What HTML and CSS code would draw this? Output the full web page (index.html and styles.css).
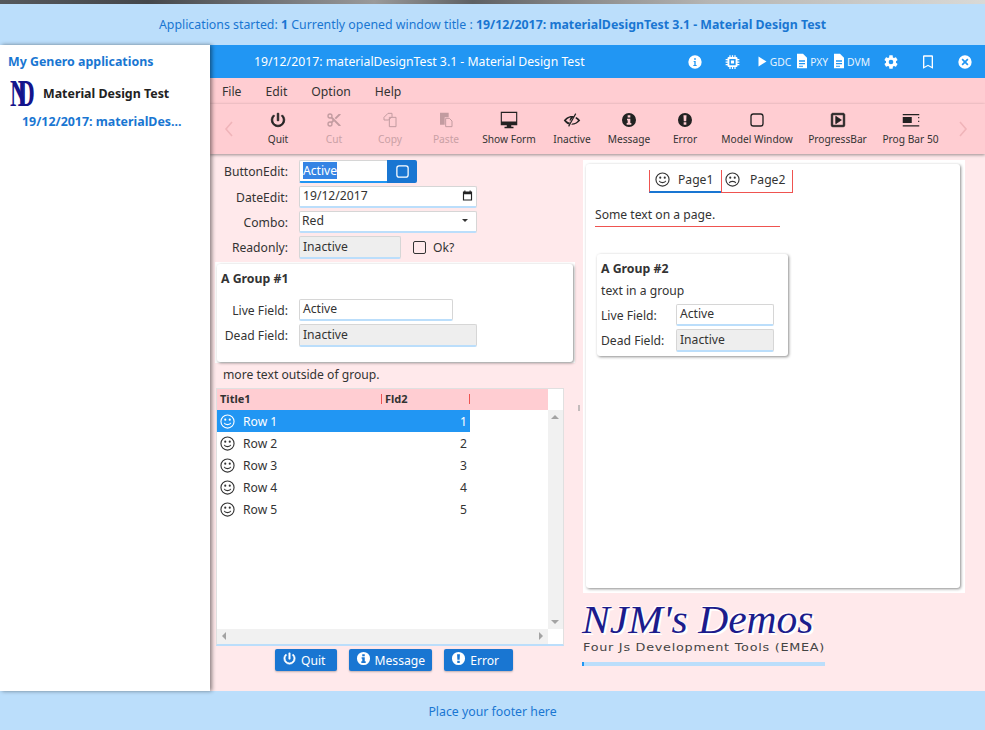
FILE: index.html
```html
<!DOCTYPE html>
<html lang="en">
<head>
  <meta charset="UTF-8">
  <meta name="viewport" content="width=device-width, initial-scale=1.0">
  <title>Material Design Test</title>
  <link rel="stylesheet" href="styles.css">
</head>
<body>
  <svg class="defs" width="0" height="0">
    <symbol id="i-power" viewBox="0 0 24 24"><path stroke="currentColor" stroke-width="1.1" d="M13,3H11V13H13V3M17.83,5.17L16.41,6.59C18.05,7.91 19,9.9 19,12A7,7 0 0,1 12,19C8.12,19 5,15.88 5,12C5,9.91 5.94,7.91 7.58,6.58L6.17,5.17C4.23,6.82 3,9.26 3,12A9,9 0 0,0 12,21A9,9 0 0,0 21,12C21,9.26 19.77,6.82 17.83,5.17Z"/></symbol>
    <symbol id="i-info" viewBox="0 0 24 24"><path fill-rule="evenodd" d="M12,1.5A10.5,10.5 0 1,0 12,22.5A10.5,10.5 0 1,0 12,1.5ZM10,5H14V8.2H10ZM9,10H14V16.5H15.5V19H8.5V16.5H10V12.5H9Z"/></symbol>
    <symbol id="i-alert" viewBox="0 0 24 24"><path fill-rule="evenodd" d="M12,1.5A10.5,10.5 0 1,0 12,22.5A10.5,10.5 0 1,0 12,1.5ZM9.7,5H14.3L13.8,14H10.2ZM10,15.5H14V19H10Z"/></symbol>
    <symbol id="i-smile" viewBox="0 0 24 24"><g fill="none" stroke="currentColor" stroke-width="1.8"><circle cx="12" cy="12" r="10.5"/><path d="M6.8,14.2C8,17.9 16,17.9 17.2,14.2"/></g><circle cx="8.4" cy="9" r="1.7"/><circle cx="15.6" cy="9" r="1.7"/></symbol>
    <symbol id="i-frown" viewBox="0 0 24 24"><g fill="none" stroke="currentColor" stroke-width="1.8"><circle cx="12" cy="12" r="10.5"/><path d="M6.8,17.6C8,14 16,14 17.2,17.6"/></g><circle cx="8.4" cy="9" r="1.7"/><circle cx="15.6" cy="9" r="1.7"/></symbol>
    <symbol id="i-square" viewBox="0 0 24 24"><rect x="3" y="3" width="18" height="18" rx="3.5" fill="none" stroke="currentColor" stroke-width="2"/></symbol>
    <symbol id="i-doc" viewBox="4 0 17 24"><path fill-rule="evenodd" d="M5,1H14L20,7V23H5ZM8,11V13H17V11ZM8,15V17H17V15ZM8,19V20.5H14V19Z"/></symbol>
  </svg>

  <div class="top-strip"></div>
  <header class="banner">Applications started: <b>1</b> Currently opened window title : <b>19/12/2017: materialDesignTest 3.1 - Material Design Test</b></header>

  <div class="middle">
    <aside class="sidebar">
      <div class="side-title">My Genero applications</div>
      <div class="side-app">
        <span class="nd-logo">ND</span>
        <span>Material Design Test</span>
      </div>
      <div class="side-window">19/12/2017: materialDes...</div>
    </aside>

    <main class="main">
      <div class="titlebar">
        <div class="win-title">19/12/2017: materialDesignTest 3.1 - Material Design Test</div>
        <div class="title-tools">
          <svg class="ti t-info" viewBox="0 0 24 24"><path fill-rule="evenodd" d="M12,2A10,10 0 1,0 12,22A10,10 0 1,0 12,2ZM11,6H13V9H11ZM10,10.5H13V16.5H14.5V18H9.5V16.5H11V12H10Z"/></svg>
          <svg class="ti t-chip" viewBox="0 0 24 24"><path fill-rule="evenodd" d="M6,4H18A2,2 0 0,1 20,6V18A2,2 0 0,1 18,20H6A2,2 0 0,1 4,18V6A2,2 0 0,1 6,4ZM7,7V17H17V7ZM9.5,9.5H14.5V14.5H9.5ZM7,1H9V4H7ZM11,1H13V4H11ZM15,1H17V4H15ZM7,20H9V23H7ZM11,20H13V23H11ZM15,20H17V23H15ZM1,7H4V9H1ZM1,11H4V13H1ZM1,15H4V17H1ZM20,7H23V9H20ZM20,11H23V13H20ZM20,15H23V17H20Z"/></svg>
          <span class="t-link t-gdc"><svg class="ts ts-play" viewBox="0 0 24 24"><path d="M5,2L21,12L5,22Z"/></svg>GDC</span>
          <span class="t-link"><svg class="ts"><use href="#i-doc"/></svg>PXY</span>
          <span class="t-link"><svg class="ts"><use href="#i-doc"/></svg>DVM</span>
          <svg class="ti t-cog" viewBox="0 0 24 24"><path d="M12,15.5A3.5,3.5 0 0,1 8.5,12A3.5,3.5 0 0,1 12,8.5A3.5,3.5 0 0,1 15.5,12A3.5,3.5 0 0,1 12,15.5M19.43,12.97C19.47,12.65 19.5,12.33 19.5,12C19.5,11.67 19.47,11.34 19.43,11L21.54,9.37C21.73,9.22 21.78,8.95 21.66,8.73L19.66,5.27C19.54,5.05 19.27,4.96 19.05,5.05L16.56,6.05C16.04,5.66 15.5,5.32 14.87,5.07L14.5,2.42C14.46,2.18 14.25,2 14,2H10C9.75,2 9.54,2.18 9.5,2.42L9.13,5.07C8.5,5.32 7.96,5.66 7.44,6.05L4.95,5.05C4.73,4.96 4.46,5.05 4.34,5.27L2.34,8.73C2.21,8.95 2.27,9.22 2.46,9.37L4.57,11C4.53,11.34 4.5,11.67 4.5,12C4.5,12.33 4.53,12.65 4.57,12.97L2.46,14.63C2.27,14.78 2.21,15.05 2.34,15.27L4.34,18.73C4.46,18.95 4.73,19.03 4.95,18.95L7.44,17.94C7.96,18.34 8.5,18.68 9.13,18.93L9.5,21.58C9.54,21.82 9.75,22 10,22H14C14.25,22 14.46,21.82 14.5,21.58L14.87,18.93C15.5,18.67 16.04,18.34 16.56,17.94L19.05,18.95C19.27,19.03 19.54,18.95 19.66,18.73L21.66,15.27C21.78,15.05 21.73,14.78 21.54,14.63L19.43,12.97Z"/></svg>
          <svg class="ti t-mark" viewBox="0 0 24 24"><path fill-rule="evenodd" d="M6,2H18A1.5,1.5 0 0,1 19.5,3.5V22L12,18L4.5,22V3.5A1.5,1.5 0 0,1 6,2ZM6.5,4V19L12,16L17.5,19V4Z"/></svg>
          <svg class="ti t-close" viewBox="0 0 24 24"><path fill-rule="evenodd" d="M12,2A10,10 0 1,0 12,22A10,10 0 1,0 12,2ZM8.6,6.8L12,10.2L15.4,6.8L17.2,8.6L13.8,12L17.2,15.4L15.4,17.2L12,13.8L8.6,17.2L6.8,15.4L10.2,12L6.8,8.6Z"/></svg>
        </div>
      </div>

      <nav class="menubar">
        <span>File</span><span>Edit</span><span>Option</span><span>Help</span>
      </nav>

      <div class="toolbar">
        <svg class="chev chev-left" viewBox="0 0 10 20"><path d="M8,3L2,10L8,17" fill="none" stroke="currentColor" stroke-width="1.6"/></svg>
        <div class="tool w-quit"><svg viewBox="0 0 24 24"><use href="#i-power"/></svg>Quit</div>
        <div class="tool w-cut off"><svg viewBox="0 0 24 24"><path d="M19,3L13,9L15,11L22,4V3M12,12.5A0.5,0.5 0 0,1 11.5,12A0.5,0.5 0 0,1 12,11.5A0.5,0.5 0 0,1 12.5,12A0.5,0.5 0 0,1 12,12.5M6,20A2,2 0 0,1 4,18C4,16.89 4.9,16 6,16A2,2 0 0,1 8,18C8,19.11 7.1,20 6,20M6,8A2,2 0 0,1 4,6C4,4.89 4.9,4 6,4A2,2 0 0,1 8,6C8,7.11 7.1,8 6,8M9.64,7.64C9.87,7.14 10,6.59 10,6A4,4 0 0,0 6,2A4,4 0 0,0 2,6A4,4 0 0,0 6,10C6.59,10 7.14,9.87 7.64,9.64L10,12L7.64,14.36C7.14,14.13 6.59,14 6,14A4,4 0 0,0 2,18A4,4 0 0,0 6,22A4,4 0 0,0 10,18C10,17.41 9.87,16.86 9.64,16.36L12,14L19,21H22V20L9.64,7.64Z"/></svg>Cut</div>
        <div class="tool w-copy off"><svg viewBox="0 0 24 24"><g fill="none" stroke="currentColor" stroke-width="1.5"><path d="M9,2H15V7L10,12H3V8Z"/><path d="M11,8H21V22H11Z"/></g></svg>Copy</div>
        <div class="tool w-paste off"><svg viewBox="0 0 24 24"><path d="M3,1H16V8H10V19H3Z"/><path d="M11.5,9.5H17L21,13.5V22H11.5Z" fill="none" stroke="currentColor" stroke-width="1.5"/></svg>Paste</div>
        <div class="tool w-show"><svg viewBox="0 0 24 24"><path fill-rule="evenodd" d="M1,1H23V19H15V21H18V23H6V21H9V19H1ZM2.5,2.5V14H21.5V2.5Z"/></svg>Show Form</div>
        <div class="tool w-inact"><svg viewBox="0 0 24 24"><path d="M12,6.5C6.5,6.5 3,10 1,12.5C3,15 5,17 8,18L9.5,15.5C7.5,15 5.8,14 4,12.5C6,10.5 8,9 10.5,8.8L9,10.5V14L15,6.8C14,6.6 13,6.5 12,6.5Z"/><path d="M17,3.5L7.5,20.5" fill="none" stroke="currentColor" stroke-width="1.5"/><path d="M17.5,8C20,9 21.5,11 23,12.5C20.5,15.5 16,18.5 11,18.3L12.3,16.5C15.5,16.5 18,15 20,12.5C18.8,11.2 17.8,10.3 16.5,9.6Z"/></svg>Inactive</div>
        <div class="tool w-msg small"><svg viewBox="0 0 24 24"><use href="#i-info"/></svg>Message</div>
        <div class="tool w-err small"><svg viewBox="0 0 24 24"><use href="#i-alert"/></svg>Error</div>
        <div class="tool w-model small"><svg viewBox="0 0 24 24"><use href="#i-square"/></svg>Model Window</div>
        <div class="tool w-prog"><svg viewBox="0 0 24 24"><path stroke="currentColor" stroke-width="1" d="M19,3H5C3.89,3 3,3.89 3,5V19A2,2 0 0,0 5,21H19A2,2 0 0,0 21,19V5C21,3.89 20.1,3 19,3M19,19H5V5H19V19M9,7V17L16.5,12L9,7Z"/></svg>ProgressBar</div>
        <div class="tool w-bar"><svg viewBox="0 0 24 24"><path d="M1,4H23V5.5H1ZM1,8H13V16H1ZM1,19H23V20.5H1ZM21.5,8H23V9.5H21.5ZM21.5,13H23V14.5H21.5Z"/></svg>Prog Bar 50</div>
        <svg class="chev chev-right" viewBox="0 0 10 20"><path d="M2,3L8,10L2,17" fill="none" stroke="currentColor" stroke-width="1.6"/></svg>
      </div>

      <div class="content">
        <section class="col-left">
          <div class="row">
            <label>ButtonEdit:</label>
            <span class="field f-btnedit"><span class="selected">Active</span></span>
            <span class="edit-btn"><svg viewBox="0 0 24 24"><use href="#i-square"/></svg></span>
          </div>
          <div class="row">
            <label>DateEdit:</label>
            <span class="field f-wide">19/12/2017
              <svg class="cal" viewBox="0 0 24 24"><path fill-rule="evenodd" d="M5,1H7.5V3H16.5V1H19V3H22V23H2V3H5ZM4.5,9V20.5H19.5V9Z"/></svg>
            </span>
          </div>
          <div class="row">
            <label>Combo:</label>
            <span class="field f-wide f-combo">Red<i class="caret"></i></span>
          </div>
          <div class="row">
            <label>Readonly:</label>
            <span class="field f-ro f-mid">Inactive</span>
            <span class="check"></span><span class="check-label">Ok?</span>
          </div>

          <div class="group-wrap">
            <div class="card group1">
              <h4>A Group #1</h4>
              <div class="row g1-row">
                <label>Live Field:</label>
                <span class="field f-live">Active</span>
              </div>
              <div class="row">
                <label>Dead Field:</label>
                <span class="field f-ro f-wide">Inactive</span>
              </div>
            </div>
          </div>

          <div class="more-text">more text outside of group.</div>

          <div class="table">
            <div class="thead">
              <div class="th th-1">Title1</div>
              <div class="th th-2">Fld2</div>
            </div>
            <div class="tbody">
              <div class="rows">
                <div class="tr on"><svg viewBox="0 0 24 24"><use href="#i-smile"/></svg><span>Row 1</span><b>1</b></div>
                <div class="tr"><svg viewBox="0 0 24 24"><use href="#i-smile"/></svg><span>Row 2</span><b>2</b></div>
                <div class="tr"><svg viewBox="0 0 24 24"><use href="#i-smile"/></svg><span>Row 3</span><b>3</b></div>
                <div class="tr"><svg viewBox="0 0 24 24"><use href="#i-smile"/></svg><span>Row 4</span><b>4</b></div>
                <div class="tr"><svg viewBox="0 0 24 24"><use href="#i-smile"/></svg><span>Row 5</span><b>5</b></div>
              </div>
              <div class="vscroll"><i class="arr arr-up"></i><i class="arr arr-down"></i></div>
            </div>
            <div class="hscroll"><div class="htrack"><i class="arr arr-left"></i><i class="arr arr-right"></i></div></div>
          </div>

          <div class="buttons">
            <span class="btn btn-quit"><svg viewBox="0 0 24 24"><use href="#i-power"/></svg>Quit</span>
            <span class="btn btn-msg"><svg viewBox="0 0 24 24"><use href="#i-info"/></svg>Message</span>
            <span class="btn btn-err"><svg viewBox="0 0 24 24"><use href="#i-alert"/></svg>Error</span>
          </div>
        </section>

        <div class="splitter"></div>

        <section class="col-right">
          <div class="folder-wrap">
            <div class="card folder">
              <div class="tabs">
                <div class="tab tab-on"><svg viewBox="0 0 24 24"><use href="#i-smile"/></svg>Page1</div>
                <div class="tab tab-off"><svg viewBox="0 0 24 24"><use href="#i-frown"/></svg>Page2</div>
              </div>
              <div class="page-text">Some text on a page.</div>
              <div class="card group2">
                <h4>A Group #2</h4>
                <div class="g2-text">text in a group</div>
                <div class="g2-row g2-live"><label>Live Field:</label><span class="field f-g2">Active</span></div>
                <div class="g2-row"><label>Dead Field:</label><span class="field f-ro f-g2">Inactive</span></div>
              </div>
            </div>
          </div>
          <div class="logo">
            <div class="logo-name">NJM's Demos</div>
            <div class="logo-sub">Four Js Development Tools (EMEA)</div>
            <div class="logo-bar"></div>
          </div>
        </section>
      </div>
    </main>
  </div>

  <footer class="footer">Place your footer here</footer>
</body>
</html>
```

FILE: styles.css
```css
* {
  box-sizing: border-box;
}
html, body {
  height: 100%;
}
body {
  margin: 0;
  height: 730px;
  overflow: hidden;
  display: flex;
  flex-direction: column;
  font-family: "Noto Sans", "Open Sans", sans-serif;
  font-size: 12.15px;
  color: #333;
  background: #fff;
}
.defs {
  position: absolute;
}
svg {
  fill: currentColor;
  display: block;
}

.top-strip {
  height: 4px;
  background: linear-gradient(90deg, #55585c 0, #44474b 15%, #7b7d80 30%, #9a9a9a 38%, #5d6063 48%, #8d8d8d 60%, #b5b5b3 72%, #d9d9d6 100%);
}
.banner {
  height: 41px;
  line-height: 41px;
  text-align: center;
  background: #bbdefb;
  color: #1976d2;
  font-size: 12.35px;
}
.footer {
  height: 39px;
  line-height: 41px;
  text-align: center;
  background: #bbdefb;
  color: #1976d2;
  font-size: 12.3px;
}

.middle {
  flex: 1;
  display: flex;
  min-height: 0;
}
.sidebar {
  width: 210px;
  flex: none;
  background: #fff;
  box-shadow: 2px 0 4px rgba(0,0,0,0.45);
  position: relative;
  z-index: 2;
  padding: 8px 8px 0;
  font-size: 12.4px;
}
.side-title {
  font-weight: bold;
  color: #1976d2;
  line-height: 17px;
}
.side-app {
  display: flex;
  align-items: center;
  height: 30px;
  margin-top: 8px;
  font-weight: bold;
  color: #222;
}
.nd-logo {
  display: block;
  flex: none;
  width: 26px;
  height: 30px;
  margin: 0 7px 0 2px;
  font-family: "Liberation Serif", serif;
  font-weight: bold;
  font-size: 38px;
  line-height: 30px;
  letter-spacing: -15px;
  color: #14148c;
  white-space: nowrap;
  transform: scaleX(0.62);
  transform-origin: left center;
}
.side-window {
  margin: 5px 0 0 14px;
  font-weight: bold;
  color: #1976d2;
  line-height: 17px;
}

.main {
  flex: 1;
  min-width: 0;
  display: flex;
  flex-direction: column;
  background: #ffe9eb;
}
.titlebar {
  height: 33px;
  flex: none;
  display: flex;
  align-items: center;
  background: #2196f3;
  color: #fff;
  padding-left: 44px;
  font-size: 12.25px;
}
.title-tools {
  margin-left: auto;
  display: flex;
  align-items: center;
  height: 100%;
}
.ti {
  width: 16px;
  height: 16px;
}
.t-chip {
  margin-left: 22px;
  width: 15px;
}
.t-link {
  display: flex;
  align-items: center;
  font-size: 10.3px;
  margin-left: 5px;
  padding-top: 1px;
  color: #e8f4fe;
}
.t-gdc {
  margin-left: 16px;
}
.ts {
  width: 12px;
  height: 16px;
  margin: -2px 2px 0 0;
  color: #fff;
}
.ts-play {
  height: 13px;
}
.t-cog {
  margin-left: 13px;
}
.t-mark {
  margin-left: 21px;
}
.t-close {
  margin: 0 12px 0 21px;
}

.menubar {
  height: 26px;
  flex: none;
  display: flex;
  gap: 24px;
  align-items: center;
  padding: 0 0 0 12px;
  background: #ffcdd2;
  font-size: 12.2px;
}
.toolbar {
  height: 50px;
  flex: none;
  display: flex;
  align-items: flex-start;
  background: #ffcdd2;
  box-shadow: 0 1px 3px rgba(0,0,0,0.4);
  position: relative;
  font-size: 10.2px;
}
.chev {
  width: 10px;
  height: 20px;
  margin-top: 15px;
  color: #f0b4b9;
  flex: none;
}
.chev-left {
  margin-left: 14px;
}
.chev-right {
  margin-left: 10px;
}
.tool {
  flex: none;
  display: flex;
  flex-direction: column;
  align-items: center;
  color: #333;
  line-height: 14px;
  padding-top: 7px;
  white-space: nowrap;
}
.tool svg {
  width: 18px;
  height: 18px;
  margin-bottom: 3px;
  color: #222;
}
.tool.small svg {
  width: 16px;
  height: 16px;
  margin: 1px 0 4px;
}
.tool.off {
  color: #c9a0a5;
}
.tool.off svg {
  color: #c29ba0;
  width: 16px;
  height: 16px;
  margin: 1px 0 4px;
}
.w-quit { width: 56px; margin-left: 16px; }
.w-cut { width: 56px; }
.w-copy { width: 56px; }
.w-paste { width: 56px; }
.w-show { width: 70px; }
.w-inact { width: 56px; }
.w-msg { width: 58px; }
.w-err { width: 54px; }
.w-model { width: 90px; }
.w-prog { width: 71px; }
.w-bar { width: 75px; }

.content {
  flex: 1;
  min-height: 0;
  display: flex;
}
.col-left {
  width: 368px;
  flex: none;
  padding: 6px 0 0 5px;
}
.row {
  display: flex;
  align-items: center;
  margin-bottom: 3px;
}
.row label {
  width: 73px;
  text-align: right;
  margin-right: 11px;
  flex: none;
}
.field {
  display: flex;
  align-items: center;
  height: 22px;
  padding: 0 3px 2px;
  background: #fff;
  border: 1px solid #d6d6d6;
  border-bottom: 2px solid #bbdefb;
  border-radius: 2px;
  color: #333;
}
.f-btnedit {
  width: 88px;
  height: 23px;
  border-right: none;
  border-bottom-color: #2196f3;
  border-radius: 2px 0 0 2px;
}
.selected {
  background: #3584e4;
  color: #fff;
}
.edit-btn {
  width: 30px;
  height: 23px;
  display: flex;
  align-items: center;
  justify-content: center;
  background: #1976d2;
  color: #fff;
  border-radius: 0 2px 2px 0;
}
.edit-btn svg {
  width: 15px;
  height: 15px;
}
.f-wide {
  width: 178px;
  position: relative;
}
.cal {
  width: 11px;
  height: 11px;
  margin-left: auto;
  color: #222;
}
.f-combo {
  padding-left: 2px;
}
.caret {
  margin-left: auto;
  margin-right: 5px;
  border: 3px solid transparent;
  border-top-color: #333;
  border-bottom: none;
}
.f-mid {
  width: 102px;
  height: 23px;
}
.f-ro {
  background: #eee;
  border-color: #d6d6d6 #d6d6d6 #bbdefb;
  height: 23px;
}
.check {
  width: 13px;
  height: 13px;
  margin-left: 12px;
  border: 1.5px solid #333;
  border-radius: 2px;
}
.check-label {
  margin-left: 7px;
}

.group-wrap {
  background: #fff;
  width: 360px;
  height: 101px;
  padding: 2px 2px 1px 2px;
  margin-top: 3px;
}
.card {
  background: #fff;
  border-radius: 3px;
  box-shadow: 1px 1px 3px rgba(0,0,0,0.45);
}
.card h4 {
  margin: 0;
  font-size: 12.3px;
  line-height: 17px;
  font-weight: bold;
  color: #333;
}
.group1 {
  height: 98px;
  padding: 6px 0 0 4px;
}
.group1 .row label {
  width: 67px;
}
.g1-row {
  margin-top: 12px;
}
.f-live {
  width: 154px;
}
.more-text {
  line-height: 17px;
  margin: 3px 0 5px 8px;
}

.table {
  width: 348px;
  height: 258px;
  margin-left: 1px;
  background: #fff;
  border: 1px solid #e0e0e0;
  border-bottom: 2px solid #bbdefb;
  display: flex;
  flex-direction: column;
}
.thead {
  height: 21px;
  flex: none;
  width: 331px;
  display: flex;
  align-items: center;
  padding-bottom: 1px;
  background: #ffcdd2;
  font-weight: bold;
  font-size: 11px;
  color: #333;
}
.th {
  height: 10px;
  line-height: 10px;
  padding-left: 3px;
  border-right: 1px solid #ef5350;
}
.th-1 {
  width: 165px;
}
.th-2 {
  width: 88px;
}
.tbody {
  flex: 1;
  min-height: 0;
  display: flex;
}
.rows {
  width: 331px;
}
.vscroll {
  width: 15px;
  background: #f1f1f1;
  position: relative;
}
.tr {
  width: 253px;
  height: 22px;
  display: flex;
  align-items: center;
  color: #333;
}
.tr svg {
  width: 15px;
  height: 15px;
  margin: 0 8px 0 3px;
  flex: none;
}
.tr b {
  font-weight: normal;
  margin-left: auto;
  margin-right: 3px;
}
.tr.on {
  background: #2196f3;
  color: #fff;
}
.hscroll {
  height: 15px;
  flex: none;
  display: flex;
}
.htrack {
  width: 331px;
  background: #f1f1f1;
  position: relative;
}
.arr {
  position: absolute;
  border: 4px solid transparent;
}
.arr-up {
  top: 5px;
  left: 3px;
  border-top: none;
  border-bottom: 4px solid #a3a3a3;
}
.arr-down {
  bottom: 5px;
  left: 3px;
  border-bottom: none;
  border-top: 4px solid #a3a3a3;
}
.arr-left {
  top: 3px;
  left: 5px;
  border-left: none;
  border-right: 4px solid #a3a3a3;
}
.arr-right {
  top: 3px;
  right: 5px;
  border-right: none;
  border-left: 4px solid #a3a3a3;
}

.buttons {
  display: flex;
  gap: 12px;
  margin: 3px 0 0 60px;
}
.btn {
  display: flex;
  align-items: center;
  height: 22px;
  padding: 0 12px 0 7px;
  background: #1976d2;
  color: #fff;
  border-radius: 2px;
  box-shadow: 0 1px 2px rgba(0,0,0,0.25);
}
.btn svg {
  width: 15px;
  height: 15px;
  margin: -3px 4px 0 0;
}
.btn-quit {
  padding-right: 11px;
}
.btn-msg {
  padding-right: 7px;
}
.btn-err {
  padding-right: 14px;
}

.splitter {
  width: 5px;
  flex: none;
  background: linear-gradient(#c4bcbc, #c4bcbc) 0 251px / 2px 6px no-repeat;
}
.col-right {
  flex: 1;
  min-width: 0;
  padding-top: 6px;
}
.folder-wrap {
  width: 382px;
  height: 433px;
  background: #fff;
  padding: 4px 5px 5px 3px;
}
.folder {
  height: 424px;
  padding-top: 6px;
}
.tabs {
  display: flex;
  margin-left: 63px;
  height: 23px;
}
.tab {
  width: 72px;
  display: flex;
  align-items: center;
  padding: 0 0 3px 5px;
}
.tab svg {
  width: 15px;
  height: 15px;
  margin-right: 8px;
}
.tab-on {
  border-left: 1px solid #ef5350;
  border-bottom: 2px solid #1976d2;
}
.tab-off {
  padding-left: 3px;
  border-left: 1px solid #ef5350;
  border-right: 1px solid #ef5350;
  border-bottom: 1px solid #ef5350;
}
.tab-off svg {
  margin-right: 10px;
}
.page-text {
  width: 185px;
  margin: 11px 0 0 9px;
  line-height: 22px;
  border-bottom: 1px solid #ef5350;
}
.group2 {
  width: 191px;
  height: 102px;
  margin: 27px 0 0 11px;
  padding: 6px 0 0 4px;
}
.g2-text {
  line-height: 17px;
  margin-top: 5px;
}
.g2-row {
  display: flex;
  align-items: center;
  margin-top: 3px;
}
.g2-live {
  margin-top: 5px;
}
.g2-row label {
  width: 75px;
  flex: none;
}
.f-g2 {
  width: 98px;
}
.logo {
  width: 243px;
  margin: 7px 0 0 -1px;
}
.logo-name {
  font-family: "Liberation Serif", serif;
  font-style: italic;
  font-size: 39px;
  line-height: 40px;
  color: #1c1c8c;
  white-space: nowrap;
  text-shadow: 2px 2px 0 #fff, -1px -1px 0 #fff;
  transform: scaleX(1.065);
  transform-origin: left center;
}
.logo-sub {
  font-family: "DejaVu Sans", sans-serif;
  font-size: 10.5px;
  letter-spacing: 0.6px;
  line-height: 12px;
  margin: 1px 0 0 1px;
  color: #444;
  white-space: nowrap;
  transform: scaleX(1.22);
  transform-origin: left center;
}
.logo-bar {
  height: 4px;
  margin-top: 9px;
  background: #bbdefb;
  border-left: 2px solid #2196f3;
}
```
